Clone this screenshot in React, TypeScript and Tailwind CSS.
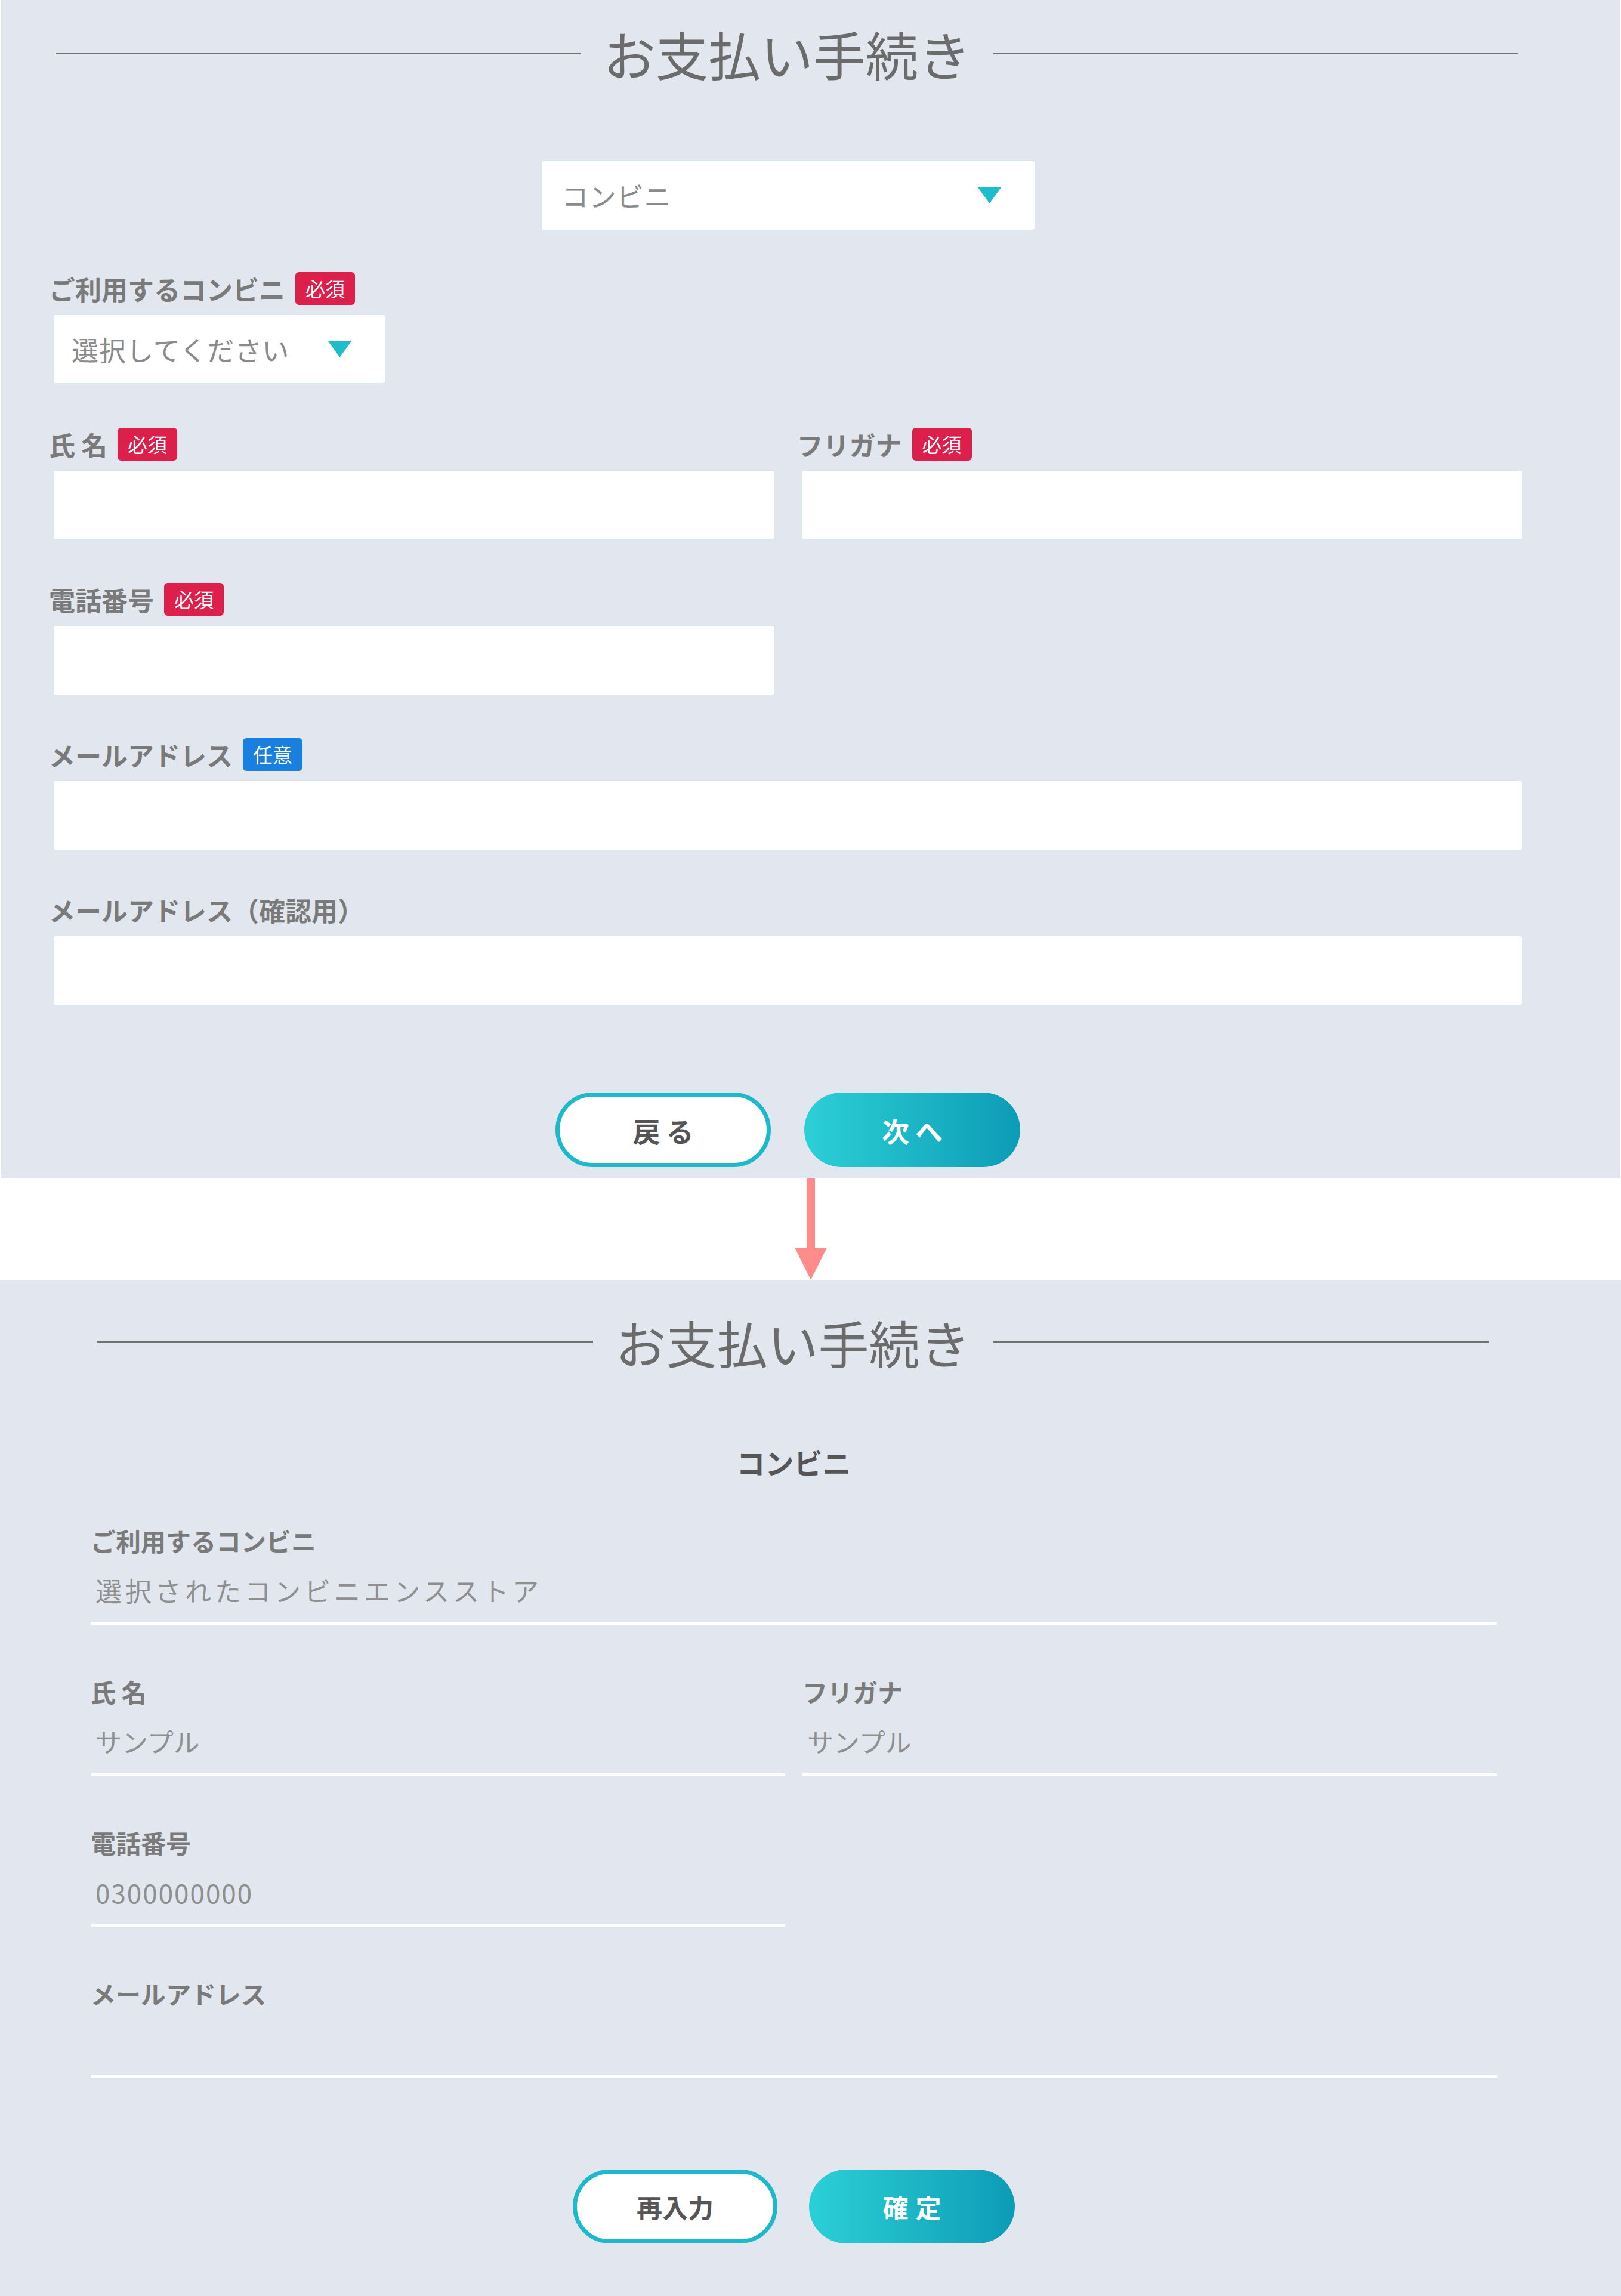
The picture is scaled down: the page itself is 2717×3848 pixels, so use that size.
import React from "react";

const Badge = ({ optional }: { optional?: boolean }) => (
  <span
    className={
      optional
        ? "inline-flex items-center justify-center w-[100px] h-[55px] rounded-[6px] bg-[#1a80e0] text-white text-[33px] font-normal leading-none"
        : "inline-flex items-center justify-center w-[100px] h-[55px] rounded-[6px] bg-[#dc1f4b] text-white text-[33px] font-normal leading-none"
    }
  >
    {optional ? "任意" : "必須"}
  </span>
);

const Caret = () => (
  <svg width="39" height="27" viewBox="0 0 39 27" className="shrink-0">
    <polygon points="0,0 39,0 19.5,27" fill="#1fbccc" />
  </svg>
);

const InputBox = () => (
  <div className="h-[119px] bg-white rounded-[5px] border-2 border-[#dbe7f1]" />
);

const FormField = ({
  label,
  badge,
  className,
}: {
  label: string;
  badge?: "req" | "opt";
  className?: string;
}) => (
  <div className={className}>
    <div className="flex items-center h-[55px] gap-[17px] ml-[-6px]">
      <span className="text-[44px] font-bold text-[#7a7a7a] leading-none">{label}</span>
      {badge === "req" && <Badge />}
      {badge === "opt" && <Badge optional />}
    </div>
    <div className="mt-[15px]">
      <InputBox />
    </div>
  </div>
);

const ConfirmField = ({
  label,
  value,
  valueClass,
  className,
}: {
  label: string;
  value: string;
  valueClass?: string;
  className?: string;
}) => (
  <div className={className}>
    <div className="h-[60px] leading-[60px] text-[42px] font-bold text-[#7a7a7a]">{label}</div>
    <div className="mt-[23px] pb-[24px] border-b-4 border-white">
      <div
        className={
          "h-[60px] leading-[60px] text-[44px] font-normal text-[#8f8f8f] pl-[8px] whitespace-nowrap " +
          (valueClass ?? "")
        }
      >
        {value}
      </div>
    </div>
  </div>
);

const Title = ({ size }: { size: "top" | "bottom" }) => (
  <div
    className={
      size === "top"
        ? "flex items-center h-[178px] gap-[38px] pl-[6px] pr-[9px]"
        : "flex items-center h-[206px] gap-[38px] pl-[11px] pr-[14px]"
    }
  >
    <div className="flex-1 h-[3px] bg-[#717171]" />
    <h1
      className={
        size === "top"
          ? "text-[88px] font-normal text-[#6b6b6b] leading-none whitespace-nowrap"
          : "text-[85px] font-normal text-[#6b6b6b] leading-none whitespace-nowrap"
      }
    >
      お支払い手続き
    </h1>
    <div className="flex-1 h-[3px] bg-[#717171]" />
  </div>
);

export default function App() {
  return (
    <div className="w-[2717px] min-h-[3848px] bg-white font-['Noto_Sans_CJK_JP','Noto_Sans',sans-serif]">
      {/* Input screen */}
      <section className="mx-[2px] bg-[#e2e7ef] pl-[86px] pr-[162px] pb-[19px]">
        <Title size="top" />

        <div className="flex justify-center mt-[90px]">
          <div className="w-[830px] h-[119px] bg-white rounded-[5px] border-2 border-[#dbe7f1] flex items-center justify-between pl-[34px] pr-[56px]">
            <span className="text-[45px] text-[#8a8a8a] leading-none tracking-[1px]">コンビニ</span>
            <Caret />
          </div>
        </div>

        <div className="mt-[69px]">
          <div className="flex items-center h-[55px] gap-[17px] ml-[-6px]">
            <span className="text-[44px] font-bold text-[#7a7a7a] leading-none">ご利用するコンビニ</span>
            <Badge />
          </div>
          <div className="mt-[15px] w-[559px] h-[118px] bg-white rounded-[5px] border-2 border-[#dbe7f1] flex items-center justify-between pl-[30px] pr-[56px]">
            <span className="text-[45px] text-[#8a8a8a] leading-none tracking-[1px]">選択してください</span>
            <Caret />
          </div>
        </div>

        <div className="grid grid-cols-2 gap-x-[42px] mt-[73px]">
          <FormField label="氏 名" badge="req" />
          <FormField label="フリガナ" badge="req" />
        </div>

        <div className="grid grid-cols-2 gap-x-[42px] mt-[71px]">
          <FormField label="電話番号" badge="req" />
        </div>

        <FormField label="メールアドレス" badge="opt" className="mt-[71px]" />
        <FormField label="メールアドレス（確認用）" className="mt-[71px]" />

        <div className="flex justify-center gap-[56px] mt-[145px]">
          <button className="w-[361px] h-[125px] rounded-full bg-white border-[7px] border-[#1db8ca] text-[46px] font-bold text-[#555] leading-none tracking-[10px] pl-[10px]">
            戻る
          </button>
          <button className="w-[362px] h-[125px] rounded-full bg-linear-to-r from-[#2bd0d6] to-[#0c9cb6] text-[46px] font-bold text-white leading-none tracking-[10px] pl-[10px]">
            次へ
          </button>
        </div>
      </section>

      {/* Arrow */}
      <div className="flex justify-center h-[170px]">
        <svg width="54" height="170" viewBox="0 0 54 170">
          <rect x="20" y="0" width="14" height="118" fill="#ff8b8b" />
          <polygon points="0,116 54,116 27,170" fill="#ff8b8b" />
        </svg>
      </div>

      {/* Confirm screen */}
      <section className="bg-[#e2e7ef] pl-[152px] pr-[208px] pb-[88px]">
        <Title size="bottom" />

        <div className="mt-[66px] h-[66px] flex items-center justify-center">
          <span className="text-[48px] font-bold text-[#555] leading-none">コンビニ</span>
        </div>

        <ConfirmField
          label="ご利用するコンビニ"
          value="選択されたコンビニエンスストア"
          valueClass="tracking-[6px] pl-[4px]"
          className="mt-[69px]"
        />

        <div className="grid grid-cols-2 gap-x-[29px] mt-[82px]">
          <ConfirmField label="氏 名" value="サンプル" />
          <ConfirmField label="フリガナ" value="サンプル" />
        </div>

        <div className="grid grid-cols-2 gap-x-[29px] mt-[82px]">
          <ConfirmField label="電話番号" value="0300000000" valueClass="tracking-[2px]" />
        </div>

        <ConfirmField label="メールアドレス" value="" className="mt-[82px]" />

        <div className="flex justify-center gap-[53px] mt-[154px]">
          <button className="w-[343px] h-[124px] rounded-full bg-white border-[7px] border-[#1db8ca] text-[43px] font-bold text-[#555] leading-none">
            再入力
          </button>
          <button className="w-[345px] h-[124px] rounded-full bg-linear-to-r from-[#2bd0d6] to-[#0c9cb6] text-[43px] font-bold text-white leading-none tracking-[12px] pl-[12px]">
            確定
          </button>
        </div>
      </section>
    </div>
  );
}
